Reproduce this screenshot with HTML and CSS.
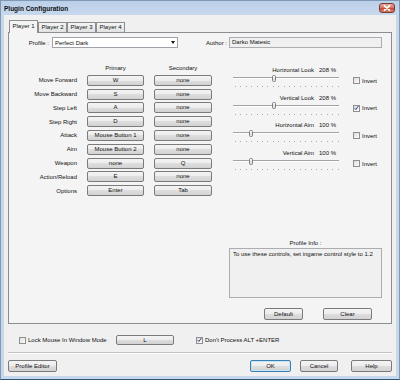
FILE: index.html
```html
<!DOCTYPE html>
<html lang="en">
<head>
  <meta charset="UTF-8">
  <title>Plugin Configuration</title>
  <link rel="stylesheet" href="styles.css">
</head>
<body>

<div class="window">
  <div class="titlebar">
    <span class="title">Plugin Configuration</span>
    <span class="close">
      <svg width="8" height="6" viewBox="0 0 8 6"><path d="M1.5 0.8 L6.5 5.2 M6.5 0.8 L1.5 5.2" stroke="#fff" stroke-width="1.7" stroke-linecap="round"/></svg>
    </span>
  </div>

  <div class="client">
    <div class="tabs">
      <div class="tab active">Player 1</div>
      <div class="tab">Player 2</div>
      <div class="tab">Player 3</div>
      <div class="tab">Player 4</div>
    </div>

    <div class="panel">
      <div class="profile-row">
        <span class="lbl-profile">Profile :</span>
        <div class="combo">Perfect Dark<span class="arrow"></span></div>
        <span class="lbl-author">Author :</span>
        <div class="field author">Darko Matesic</div>
      </div>

      <div class="main">
        <div class="bindings">
          <span></span><span class="colhead">Primary</span><span class="colhead">Secondary</span>
          <span class="action">Move Forward</span><button class="btn">W</button><button class="btn">none</button>
          <span class="action">Move Backward</span><button class="btn">S</button><button class="btn">none</button>
          <span class="action">Step Left</span><button class="btn">A</button><button class="btn">none</button>
          <span class="action">Step Right</span><button class="btn">D</button><button class="btn">none</button>
          <span class="action">Attack</span><button class="btn">Mouse Button 1</button><button class="btn">none</button>
          <span class="action">Aim</span><button class="btn">Mouse Button 2</button><button class="btn">none</button>
          <span class="action">Weapon</span><button class="btn">none</button><button class="btn">Q</button>
          <span class="action">Action/Reload</span><button class="btn">E</button><button class="btn">none</button>
          <span class="action">Options</span><button class="btn">Enter</button><button class="btn">Tab</button>
        </div>

        <div class="side">
          <div class="sliders">
            <div class="slider-row">
              <div class="slider">
                <div class="slider-label">Horizontal Look<span class="val">208 %</span></div>
                <div class="track"><span class="thumb" style="left: 39px"></span></div>
                <div class="ticks"></div>
              </div>
              <div class="check"><span class="box"></span>Invert</div>
            </div>
            <div class="slider-row">
              <div class="slider">
                <div class="slider-label">Vertical Look<span class="val">208 %</span></div>
                <div class="track"><span class="thumb" style="left: 39px"></span></div>
                <div class="ticks"></div>
              </div>
              <div class="check"><span class="box"><svg width="6" height="6" viewBox="0 0 6 6"><path d="M0.8 3.2 L2.3 4.8 L5.3 0.6" fill="none" stroke="#1c3a78" stroke-width="1.1"/></svg></span>Invert</div>
            </div>
            <div class="slider-row">
              <div class="slider">
                <div class="slider-label">Horizontal Aim<span class="val">100 %</span></div>
                <div class="track"><span class="thumb" style="left: 16px"></span></div>
                <div class="ticks"></div>
              </div>
              <div class="check"><span class="box"></span>Invert</div>
            </div>
            <div class="slider-row">
              <div class="slider">
                <div class="slider-label">Vertical Aim<span class="val">100 %</span></div>
                <div class="track"><span class="thumb" style="left: 16px"></span></div>
                <div class="ticks"></div>
              </div>
              <div class="check"><span class="box"></span>Invert</div>
            </div>
          </div>

          <div class="info">
            <div class="info-label">Profile Info :</div>
            <div class="field info-text">To use these controls, set ingame control style to 1.2</div>
            <div class="info-buttons">
              <button class="btn btn-default">Default</button>
              <button class="btn btn-clear">Clear</button>
            </div>
          </div>
        </div>
      </div>
    </div>

    <div class="options">
      <div class="check lock"><span class="box"></span>Lock Mouse In Window Mode</div>
      <button class="btn key-l">L</button>
      <div class="check alt"><span class="box"><svg width="6" height="6" viewBox="0 0 6 6"><path d="M0.8 3.2 L2.3 4.8 L5.3 0.6" fill="none" stroke="#1c3a78" stroke-width="1.1"/></svg></span>Don't Process ALT +ENTER</div>
    </div>

    <div class="separator"></div>

    <div class="footer">
      <button class="btn btn-editor">Profile Editor</button>
      <button class="btn btn-ok">OK</button>
      <button class="btn btn-cancel">Cancel</button>
      <button class="btn btn-help">Help</button>
    </div>
  </div>
</div>

</body>
</html>
```

FILE: styles.css
```css
body {
  margin: 0;
  font-family: "Liberation Sans", Arial, sans-serif;
  font-size: 6px;
  color: #111;
}
.window {
  width: 400px;
  height: 380px;
  box-sizing: border-box;
  border: 1px solid #8097b5;
  border-bottom-color: #2d5775;
  background: #c7d8ed;
  display: flex;
  flex-direction: column;
}
.titlebar {
  height: 14px;
  display: flex;
  align-items: center;
  justify-content: space-between;
  padding: 0 4px 0 3px;
  background: linear-gradient(#bbcfe8, #c8d9ee);
}
.title {
  font-size: 6.5px;
  font-weight: bold;
  color: #111;
}
.close {
  width: 16px;
  height: 10px;
  box-sizing: border-box;
  border: 1px solid #7a3b35;
  border-radius: 3px;
  background: linear-gradient(#e9a99c, #d2705f 50%, #c24a37 50%, #d97b63);
  display: flex;
  align-items: center;
  justify-content: center;
}
.client {
  margin: 0 3px;
  height: 361px;
  box-sizing: border-box;
  padding: 5px 4px 0;
  background: #f0f0f0;
}

/* tabs */
.tabs {
  display: flex;
  align-items: flex-end;
  height: 12px;
  padding-left: 1px;
}
.tab {
  width: 29px;
  height: 10px;
  box-sizing: border-box;
  border: 1px solid #8c8e94;
  border-bottom: none;
  background: linear-gradient(#f4f4f4, #e2e2e2);
  text-align: center;
  line-height: 9px;
}
.tab.active {
  height: 13px;
  margin-bottom: -1px;
  line-height: 11px;
  background: #f4f4f4;
  position: relative;
  z-index: 1;
}
.panel {
  height: 292px;
  box-sizing: border-box;
  border: 1px solid #8c8e94;
  background: #f4f4f4;
  padding: 4px 0 3px;
  display: flex;
  flex-direction: column;
}

/* profile row */
.profile-row {
  display: flex;
  align-items: center;
  height: 11px;
}
.lbl-profile {
  width: 40px;
  text-align: right;
  margin-right: 3px;
}
.lbl-author {
  width: 49px;
  text-align: right;
  margin-right: 2px;
}
.combo {
  width: 126px;
  height: 11px;
  box-sizing: border-box;
  border: 1px solid #9fa3a9;
  background: #fff;
  padding-left: 2px;
  display: flex;
  align-items: center;
}
.arrow {
  margin-left: auto;
  margin-right: 2px;
  border-top: 3px solid #111;
  border-left: 2.5px solid transparent;
  border-right: 2.5px solid transparent;
}
.field {
  box-sizing: border-box;
  border: 1px solid #abadb3;
  background: #f0f0f0;
}
.author {
  width: 153px;
  height: 11px;
  padding-left: 2px;
  line-height: 9px;
}

/* bindings */
.main {
  display: flex;
  flex: 1;
  margin-top: 16px;
}
.bindings {
  display: grid;
  grid-template-columns: 68px 57px 58px;
  grid-template-rows: 8px repeat(9, 11px);
  column-gap: 10px;
  row-gap: 2.8px;
  align-content: start;
  align-items: center;
}
.colhead {
  text-align: center;
}
.action {
  text-align: right;
}
.btn {
  font: inherit;
  color: #111;
  height: 11px;
  padding: 0;
  box-sizing: border-box;
  border: 1px solid #7b7b7b;
  border-radius: 2px;
  background: linear-gradient(#f4f4f4, #ececec 50%, #dedede 50%, #d2d2d2);
  text-align: center;
  line-height: 9px;
}

/* sliders */
.side {
  flex: 1;
  display: flex;
  flex-direction: column;
}
.sliders {
  padding-top: 2px;
}
.slider-row {
  display: flex;
  height: 21px;
  margin-bottom: 6.7px;
}
.slider {
  width: 110px;
  margin-left: 19px;
}
.slider-label {
  height: 8px;
  line-height: 8px;
  text-align: right;
  padding-right: 5px;
}
.val {
  margin-left: 5px;
}
.track {
  position: relative;
  height: 8px;
  margin: 0 2px;
}
.track::before {
  content: "";
  position: absolute;
  left: 0;
  right: 0;
  top: 3px;
  height: 1px;
  background: #a3a3a3;
  border-bottom: 1px solid #fff;
}
.thumb {
  position: absolute;
  top: 0.5px;
  width: 4px;
  height: 7px;
  box-sizing: border-box;
  border: 1px solid #7c7c7c;
  border-radius: 1.5px;
  background: linear-gradient(#f8f8f8, #d8d8d8);
}
.ticks {
  height: 5px;
  margin: 0 2px 0 4px;
  background: repeating-linear-gradient(to right, #a8a8a8 0 1px, transparent 1px 5.4px) left bottom / 100% 1px no-repeat;
}
.check {
  display: flex;
  align-items: center;
  gap: 2px;
}
.slider-row .check {
  margin-left: 12px;
  margin-top: 11px;
  align-self: flex-start;
}
.box {
  width: 7px;
  height: 7px;
  box-sizing: border-box;
  border: 1px solid #8f8f8f;
  background: linear-gradient(135deg, #dcdcdc, #fdfdfd);
  display: flex;
  align-items: center;
  justify-content: center;
}

/* profile info */
.info {
  margin-top: auto;
  margin-left: 17px;
  width: 153px;
}
.info-label {
  height: 8px;
  line-height: 8px;
  text-align: center;
  margin-bottom: 1px;
}
.info-text {
  height: 50px;
  padding: 2px 3px;
}
.info-buttons {
  display: flex;
  gap: 20px;
  margin-top: 10px;
  padding-left: 35px;
}
.info-buttons .btn {
  height: 12px;
}
.btn-default {
  width: 39px;
}
.btn-clear {
  width: 49px;
}

/* bottom */
.options {
  display: flex;
  align-items: center;
  height: 10px;
  margin-top: 11px;
  padding-left: 11px;
}
.lock {
  width: 97px;
}
.key-l {
  width: 58px;
  height: 10px;
}
.alt {
  margin-left: 22px;
}
.separator {
  margin-top: 7px;
  border-top: 1px solid #c4c4c4;
  border-bottom: 1px solid #fff;
}
.footer {
  display: flex;
  margin-top: 6px;
}
.footer .btn {
  height: 12px;
  line-height: 10px;
}
.btn-editor {
  width: 49px;
}
.btn-ok {
  width: 41px;
  margin-left: auto;
  border-color: #3c7fb1;
  box-shadow: inset 0 0 0 1px #c4e4f7;
}
.btn-cancel {
  width: 38px;
  margin-left: 9px;
}
.btn-help {
  width: 41px;
  margin-left: 13px;
}
```
